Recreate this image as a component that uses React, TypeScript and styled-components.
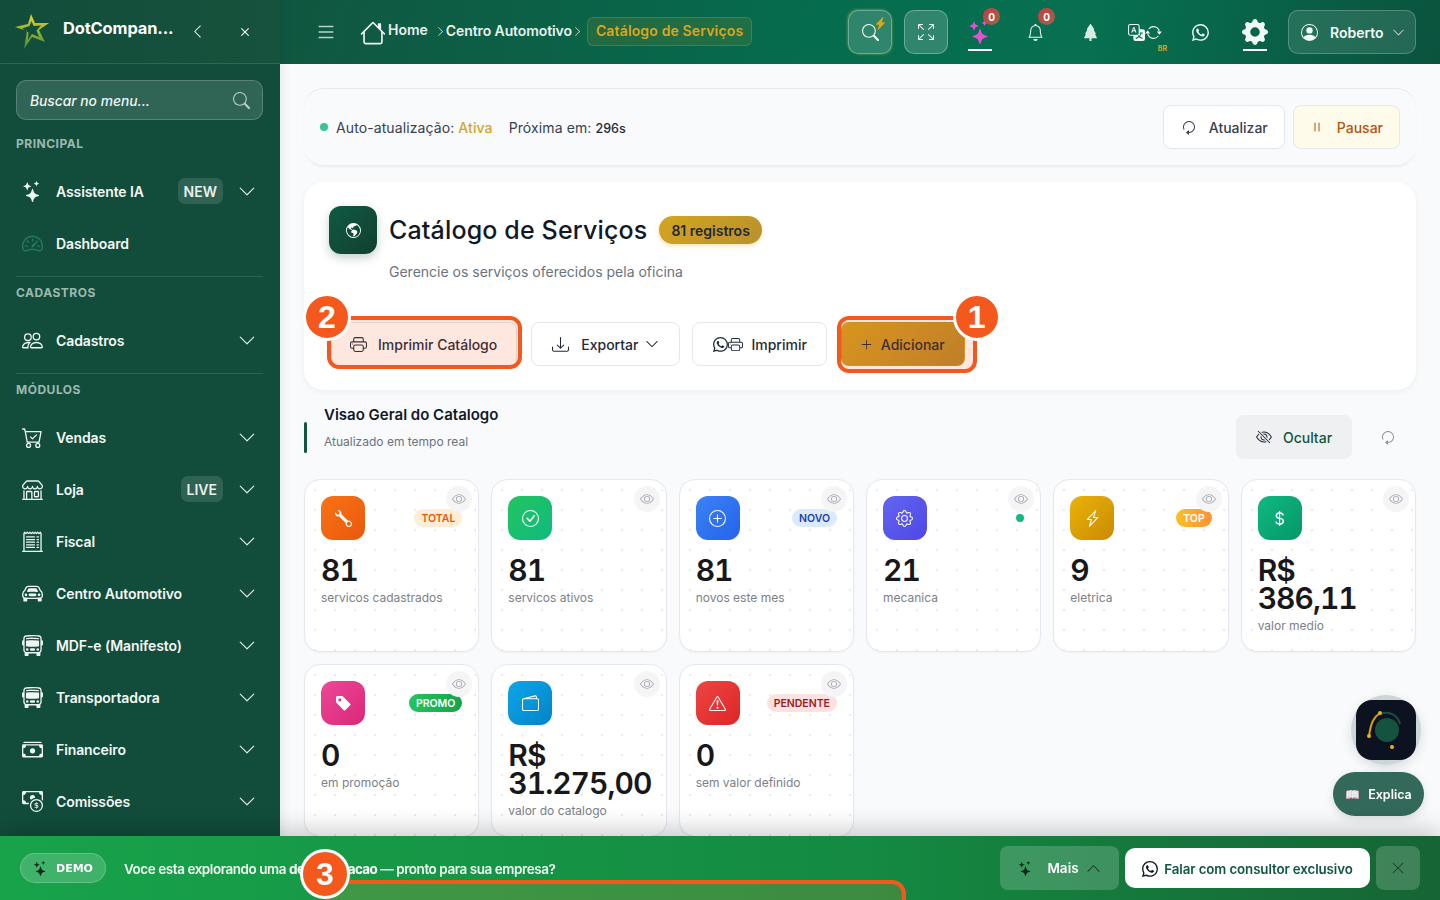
import React from 'react';
import styled, { createGlobalStyle } from 'styled-components';
import {
  BsArrowClockwise, BsArrowRepeat, BsArrowsFullscreen, BsBell, BsBusFront, BsCarFront, BsCartCheck,
  BsCashCoin, BsCashStack, BsCheckCircle, BsChevronDown, BsChevronLeft, BsChevronRight, BsChevronUp,
  BsCurrencyDollar, BsDownload, BsExclamationTriangle, BsEye, BsEyeSlash, BsGear, BsGearFill,
  BsGlobeAmericas, BsHouse, BsLightningCharge, BsLightningChargeFill, BsList, BsPause, BsPeople,
  BsPersonCircle, BsPlusCircle, BsPlusLg, BsPrinter, BsReceiptCutoff, BsSearch, BsShop,
  BsSpeedometer2, BsStars, BsTagFill, BsTranslate, BsTreeFill, BsWallet2, BsWhatsapp, BsWrench, BsX, BsXLg,
} from 'react-icons/bs';

const GlobalStyle = createGlobalStyle`
  html, body {
    margin: 0;
    height: 100%;
    overflow: hidden;
    background: #f9fafb;
    font-family: 'Inter', 'Liberation Sans', sans-serif;
  }
  * { box-sizing: border-box; }
`;

type NavEntry = { label: string; icon: React.ReactNode; tag?: string; dim?: boolean; noArrow?: boolean };

const principal: NavEntry[] = [
  { label: 'Assistente IA', icon: <BsStars />, tag: 'NEW' },
  { label: 'Dashboard', icon: <BsSpeedometer2 />, dim: true, noArrow: true },
];
const cadastros: NavEntry[] = [{ label: 'Cadastros', icon: <BsPeople /> }];
const modulos: NavEntry[] = [
  { label: 'Vendas', icon: <BsCartCheck /> },
  { label: 'Loja', icon: <BsShop />, tag: 'LIVE' },
  { label: 'Fiscal', icon: <BsReceiptCutoff /> },
  { label: 'Centro Automotivo', icon: <BsCarFront /> },
  { label: 'MDF-e (Manifesto)', icon: <BsBusFront /> },
  { label: 'Transportadora', icon: <BsBusFront /> },
  { label: 'Financeiro', icon: <BsCashStack /> },
  { label: 'Comissões', icon: <BsCashCoin /> },
];

type Stat = { value: string; label: string; icon: React.ReactNode; from: string; to: string; badge?: string; tone?: string };

const stats: Stat[] = [
  { value: '81', label: 'servicos cadastrados', icon: <BsWrench />, from: '#f97316', to: '#ea580c', badge: 'TOTAL', tone: 'orange' },
  { value: '81', label: 'servicos ativos', icon: <BsCheckCircle />, from: '#22c55e', to: '#10b981' },
  { value: '81', label: 'novos este mes', icon: <BsPlusCircle />, from: '#3b82f6', to: '#2563eb', badge: 'NOVO', tone: 'blue' },
  { value: '21', label: 'mecanica', icon: <BsGear />, from: '#6366f1', to: '#4f46e5', tone: 'dot' },
  { value: '9', label: 'eletrica', icon: <BsLightningCharge />, from: '#eab308', to: '#ca8a04', badge: 'TOP', tone: 'top' },
  { value: 'R$ 386,11', label: 'valor medio', icon: <BsCurrencyDollar />, from: '#10b981', to: '#059669' },
  { value: '0', label: 'em promoção', icon: <BsTagFill />, from: '#ec4899', to: '#db2777', badge: 'PROMO', tone: 'green' },
  { value: 'R$ 31.275,00', label: 'valor do catalogo', icon: <BsWallet2 />, from: '#0ea5e9', to: '#0284c7' },
  { value: '0', label: 'sem valor definido', icon: <BsExclamationTriangle />, from: '#ef4444', to: '#dc2626', badge: 'PENDENTE', tone: 'red' },
];

function NavGroup({ items }: { items: NavEntry[] }) {
  return (
    <>
      {items.map((item) => (
        <NavRow key={item.label}>
          <NavIcon $dim={item.dim}>{item.icon}</NavIcon>
          <NavLabel>{item.label}</NavLabel>
          {item.tag && <NavTag>{item.tag}</NavTag>}
          {!item.noArrow && <NavArrow><BsChevronDown /></NavArrow>}
        </NavRow>
      ))}
    </>
  );
}

function StarLogo() {
  return (
    <svg width="38" height="38" viewBox="0 0 38 38" fill="none">
      <defs>
        <linearGradient id="star" x1="0" y1="0" x2="0" y2="1">
          <stop offset="0" stopColor="#e8d52a" />
          <stop offset="1" stopColor="#3f8f3a" />
        </linearGradient>
      </defs>
      <path
        d="M17 1 L21 10 L35 10 L25 17 L31 29 L18 24 L10 36 L13 18 L1 14 L14 11 Z M17.5 8 L15.5 13 L8 15.5 L14.5 19.5 L14 27 L18 21 L25 24 L22.5 17.5 L27 12.5 L19.5 13 Z"
        fill="url(#star)"
        fillRule="evenodd"
      />
    </svg>
  );
}

function AiMark() {
  return (
    <svg width="60" height="60" viewBox="0 0 60 60" fill="none">
      <circle cx="31" cy="30" r="12" fill="#14533f" />
      <path d="M24 14 C34 10 42 16 44 24" stroke="#14533f" strokeWidth="2" />
      <path d="M24 13 C18 17 15 22 13 36" stroke="#d4a017" strokeWidth="2" />
      <circle cx="24" cy="13" r="2" fill="#eab308" />
      <circle cx="13" cy="36" r="2" fill="#eab308" />
      <circle cx="36" cy="47" r="2" fill="#eab308" />
    </svg>
  );
}

export default function App() {
  return (
    <>
      <GlobalStyle />
      <Shell>
        <Sidebar>
          <Brand>
            <StarLogo />
            <BrandName>DotCompan...</BrandName>
            <BrandAction><BsChevronLeft /></BrandAction>
            <BrandClose><BsX /></BrandClose>
          </Brand>
          <SideBody>
            <MenuSearch>
              <span>Buscar no menu...</span>
              <BsSearch />
            </MenuSearch>
            <SectionLabel>PRINCIPAL</SectionLabel>
            <NavGroup items={principal} />
            <SideDivider />
            <SectionLabel>CADASTROS</SectionLabel>
            <NavGroup items={cadastros} />
            <SideDivider />
            <SectionLabel>MÓDULOS</SectionLabel>
            <NavGroup items={modulos} />
          </SideBody>
        </Sidebar>

        <Column>
          <Header>
            <Crumbs>
              <Burger><BsList /></Burger>
              <HomeIcon><BsHouse /></HomeIcon>
              <HomeLabel>Home</HomeLabel>
              <CrumbSep $gap={7}><BsChevronRight /></CrumbSep>
              <CrumbText>Centro Automotivo</CrumbText>
              <CrumbSep $gap={0}><BsChevronRight /></CrumbSep>
              <CrumbChip>Catálogo de Serviços</CrumbChip>
            </Crumbs>
            <HeaderTools>
              <GlassButton $glow>
                <BsSearch />
                <Bolt><BsLightningChargeFill /></Bolt>
              </GlassButton>
              <GlassButton><BsArrowsFullscreen /></GlassButton>
              <ToolGroup>
                <ToolSlot $active $color="#e64fd0" $size={24}>
                  <BsStars />
                  <CountBadge>0</CountBadge>
                </ToolSlot>
                <ToolSlot>
                  <BsBell />
                  <CountBadge>0</CountBadge>
                </ToolSlot>
                <ToolSlot $color="#d8ece4"><BsTreeFill /></ToolSlot>
                <ToolSlot>
                  <TranslatePair>
                    <BsTranslate />
                    <BsArrowRepeat />
                  </TranslatePair>
                  <LangTag>BR</LangTag>
                </ToolSlot>
                <ToolSlot><BsWhatsapp /></ToolSlot>
                <ToolSlot $active $size={26}><BsGearFill /></ToolSlot>
              </ToolGroup>
              <ProfileButton>
                <BsPersonCircle />
                <span>Roberto</span>
                <ProfileArrow><BsChevronDown /></ProfileArrow>
              </ProfileButton>
            </HeaderTools>
          </Header>

          <Main>
            <AutoCard>
              <AutoStatus>
                <StatusDot />
                <span>Auto-atualização: <ActiveWord>Ativa</ActiveWord></span>
                <NextRun>Próxima em: <strong>296s</strong></NextRun>
              </AutoStatus>
              <AutoActions>
                <AutoButton><ReloadGlyph><BsArrowClockwise /></ReloadGlyph>Atualizar</AutoButton>
                <AutoButton $warn><BsPause />Pausar</AutoButton>
              </AutoActions>
            </AutoCard>

            <CatalogCard>
              <TitleRow>
                <TitleIcon><BsGlobeAmericas /></TitleIcon>
                <PageTitle>Catálogo de Serviços</PageTitle>
                <CountPill>81 registros</CountPill>
              </TitleRow>
              <PageHint>Gerencie os serviços oferecidos pela oficina</PageHint>
              <ActionRow>
                <Marked $mr={2}>
                  <ActionButton $pad={18} $padRight={19}><BsPrinter />Imprimir Catálogo</ActionButton>
                  <Outline $top={-6} $left={-4} $right={-5} $bottom={-3} />
                  <StepBadge $x="left">2</StepBadge>
                </Marked>
                <ActionButton $gap={12}>
                  <BsDownload />Exportar
                  <SmallArrow><BsChevronDown /></SmallArrow>
                </ActionButton>
                <ActionButton $gap={8} $padRight={19}>
                  <IconPair><BsWhatsapp /><BsPrinter /></IconPair>Imprimir
                </ActionButton>
                <Marked $ml={2}>
                  <ActionButton $gold $pad={18} $padRight={19} $gap={8}><BsPlusLg />Adicionar</ActionButton>
                  <Outline $top={-6} $left={-4} $right={-12} $bottom={-7} />
                  <StepBadge $x="right">1</StepBadge>
                </Marked>
              </ActionRow>
            </CatalogCard>

            <OverviewHead>
              <AccentBar />
              <OverviewText>
                <OverviewTitle>Visao Geral do Catalogo</OverviewTitle>
                <OverviewSub>Atualizado em tempo real</OverviewSub>
              </OverviewText>
              <OverviewTools>
                <HideButton><BsEyeSlash />Ocultar</HideButton>
                <ReloadIcon><ReloadGlyph><BsArrowClockwise /></ReloadGlyph></ReloadIcon>
              </OverviewTools>
            </OverviewHead>

            <StatGrid>
              {stats.map((stat) => (
                <StatCard key={stat.label}>
                  <EyeToggle><BsEye /></EyeToggle>
                  <StatTop>
                    <StatIcon $from={stat.from} $to={stat.to}>{stat.icon}</StatIcon>
                    {stat.badge && <StatBadge $tone={stat.tone}>{stat.badge}</StatBadge>}
                    {stat.tone === 'dot' && <LiveDot />}
                  </StatTop>
                  <StatValue>{stat.value}</StatValue>
                  <StatLabel>{stat.label}</StatLabel>
                </StatCard>
              ))}
            </StatGrid>
          </Main>
        </Column>
      </Shell>

      <FloatStack>
        <AiHalo>
          <AiButton><AiMark /></AiButton>
        </AiHalo>
        <ExplainButton><span>📖</span>Explica</ExplainButton>
      </FloatStack>

      <DemoBar>
        <DemoPill><BsStars />DEMO</DemoPill>
        <DemoText>Voce esta explorando uma <strong>demonstracao</strong> — pronto para sua empresa?</DemoText>
        <DemoActions>
          <MoreButton>
            <DarkStars><BsStars /></DarkStars>
            Mais
            <DarkArrow><BsChevronUp /></DarkArrow>
          </MoreButton>
          <ConsultButton><BsWhatsapp />Falar com consultor exclusivo</ConsultButton>
          <CloseButton><BsXLg /></CloseButton>
        </DemoActions>
        <BarOutline />
        <BarStep>3</BarStep>
      </DemoBar>
    </>
  );
}

const Shell = styled.div`
  display: flex;
  height: 100vh;
  overflow: hidden;
`;

const Sidebar = styled.aside`
  width: 280px;
  flex-shrink: 0;
  height: 100%;
  background: #124d3b;
  color: #f4f8f6;
  box-shadow: 2px 0 10px rgba(0, 0, 0, 0.08);
  z-index: 2;
`;

const Brand = styled.div`
  height: 64px;
  display: flex;
  align-items: center;
  padding-left: 14px;
  border-bottom: 1px solid rgba(255, 255, 255, 0.12);
  background: linear-gradient(90deg, #124d3b, #16523c);
`;

const BrandName = styled.div`
  width: 112px;
  margin-left: 11px;
  margin-top: -8px;
  font-size: 16.4px;
  font-weight: 700;
  letter-spacing: -0.1px;
  white-space: nowrap;
  color: #fff;
`;

const BrandAction = styled.div`
  display: flex;
  margin-left: 15px;
  font-size: 15px;
`;

const BrandClose = styled.div`
  display: flex;
  margin-left: 31px;
  font-size: 18px;
`;

const SideBody = styled.div`
  padding: 16px 17px 0 16px;
`;

const MenuSearch = styled.div`
  height: 40px;
  display: flex;
  align-items: center;
  justify-content: space-between;
  padding: 1px 12px 0 13px;
  border: 1px solid rgba(255, 255, 255, 0.2);
  border-radius: 10px;
  background: rgba(255, 255, 255, 0.13);
  font-size: 13.8px;
  font-style: italic;
  font-weight: 500;
  color: #f0f5f3;
  margin-bottom: 16px;

  svg {
    font-size: 17px;
    color: #b9cfc8;
  }
`;

const SectionLabel = styled.div`
  height: 16px;
  line-height: 16px;
  font-size: 12px;
  font-weight: 700;
  letter-spacing: 0.5px;
  color: #9db9af;
  margin-bottom: 13px;
`;

const SideDivider = styled.div`
  height: 1px;
  margin: 7px 0 8px;
  background: rgba(255, 255, 255, 0.12);
`;

const NavRow = styled.div`
  height: 52px;
  display: flex;
  align-items: center;
  padding: 0 7px 0 5px;
`;

const NavIcon = styled.div<{ $dim?: boolean }>`
  width: 22px;
  display: flex;
  justify-content: center;
  font-size: 21px;
  color: ${(p) => (p.$dim ? '#2a7a60' : '#eef5f2')};
  margin-right: 13px;
`;

const NavLabel = styled.div`
  flex: 1;
  font-size: 14px;
  font-weight: 600;
  color: #f2f7f5;
  letter-spacing: -0.1px;
`;

const NavTag = styled.div`
  height: 26px;
  padding: 0 6px;
  display: flex;
  align-items: center;
  border-radius: 7px;
  background: rgba(255, 255, 255, 0.12);
  font-size: 14px;
  font-weight: 600;
  color: #e8f0ed;
`;

const NavArrow = styled.div`
  width: 18px;
  display: flex;
  justify-content: center;
  margin-left: 15px;
  font-size: 19px;
  color: #e4eeea;
`;

const Column = styled.div`
  flex: 1;
  min-width: 0;
  display: flex;
  flex-direction: column;
`;

const Header = styled.header`
  height: 64px;
  flex-shrink: 0;
  display: flex;
  align-items: center;
  justify-content: space-between;
  padding: 0 24px 0 37px;
  background: linear-gradient(100deg, #115640 0%, #056d4e 48%, #067051 70%, #0b533e 100%);
  color: #eef6f3;
`;

const Crumbs = styled.nav`
  display: flex;
  align-items: center;
`;

const Burger = styled.div`
  display: flex;
  font-size: 22px;
  color: #b9d2c9;
  margin: 0 23px 0 -2px;
`;

const HomeIcon = styled.div`
  display: flex;
  font-size: 26px;
  color: #f0f6f3;
  margin-top: 2px;
`;

const HomeLabel = styled.div`
  font-size: 14px;
  font-weight: 600;
  color: #e6f1ed;
  margin: -6px 0 0 2px;
`;

const CrumbSep = styled.div<{ $gap: number }>`
  display: flex;
  font-size: 11px;
  color: #dceae5;
  margin: -2px 0 0 ${(p) => p.$gap}px;
`;

const CrumbText = styled.div`
  font-size: 14px;
  font-weight: 600;
  letter-spacing: -0.1px;
  color: #e6f1ed;
  margin-top: -3px;
`;

const CrumbChip = styled.div`
  height: 29px;
  display: flex;
  align-items: center;
  margin: -1px 0 0 4px;
  padding: 0 8px 2px;
  border: 1px solid rgba(255, 255, 255, 0.13);
  border-radius: 6px;
  background: rgba(212, 160, 23, 0.12);
  font-size: 14px;
  font-weight: 600;
  letter-spacing: 0.15px;
  color: #d9a61e;
`;

const HeaderTools = styled.div`
  display: flex;
  align-items: center;
  gap: 12px;
`;

const GlassButton = styled.div<{ $glow?: boolean }>`
  position: relative;
  width: 44px;
  height: 44px;
  display: flex;
  align-items: center;
  justify-content: center;
  border: 1px solid rgba(255, 255, 255, 0.3);
  border-radius: 10px;
  background: rgba(255, 255, 255, 0.17);
  font-size: ${(p) => (p.$glow ? 17 : 16)}px;
  color: #f2f8f5;
  box-shadow: ${(p) => (p.$glow ? '-1px -1px 2px rgba(220, 190, 40, 0.35), 1px 1px 2px rgba(220, 190, 40, 0.25)' : 'none')};
`;

const Bolt = styled.span`
  position: absolute;
  top: 6px;
  right: 4px;
  display: flex;
  font-size: 13px;
  color: #d9a61e;
`;

const ToolGroup = styled.div`
  display: flex;
  gap: 11px;
  margin-left: -2px;
  margin-right: -1px;
`;

const ToolSlot = styled.div<{ $active?: boolean; $color?: string; $size?: number }>`
  position: relative;
  width: 44px;
  height: 44px;
  display: flex;
  align-items: center;
  justify-content: center;
  font-size: ${(p) => p.$size ?? 17}px;
  color: ${(p) => p.$color ?? '#f2f8f5'};

  &::after {
    content: '';
    display: ${(p) => (p.$active ? 'block' : 'none')};
    position: absolute;
    left: 10px;
    right: 10px;
    bottom: 3px;
    height: 2px;
    background: #fff;
  }
`;

const CountBadge = styled.span`
  position: absolute;
  top: -2px;
  right: 2px;
  width: 17px;
  height: 17px;
  border-radius: 50%;
  display: flex;
  align-items: center;
  justify-content: center;
  background: linear-gradient(135deg, #d6393e, #8c6a4f);
  font-size: 10px;
  font-weight: 700;
  color: #fff;
`;

const TranslatePair = styled.div`
  display: flex;
  align-items: center;
  font-size: 17px;
`;

const LangTag = styled.span`
  position: absolute;
  right: 0;
  bottom: 1px;
  font-size: 7px;
  font-weight: 700;
  color: #d9a61e;
`;

const ProfileButton = styled.div`
  width: 128px;
  height: 44px;
  display: flex;
  align-items: center;
  padding-left: 12px;
  border: 1px solid rgba(255, 255, 255, 0.22);
  border-radius: 10px;
  background: rgba(255, 255, 255, 0.11);
  font-size: 14px;
  font-weight: 600;
  color: #f2f8f5;

  svg {
    font-size: 17px;
  }

  span {
    margin-left: 12px;
  }
`;

const ProfileArrow = styled.div`
  display: flex;
  margin-left: 8px;

  svg {
    font-size: 13px;
    color: #c9ddd6;
  }
`;

const Main = styled.main`
  flex: 1;
  min-height: 0;
  overflow: hidden;
  padding: 24px 24px 0;
  background: #f9fafb;
`;

const AutoCard = styled.section`
  height: 77px;
  display: flex;
  align-items: center;
  justify-content: space-between;
  padding: 0 16px;
  margin-bottom: 17px;
  border-radius: 20px;
  border-top: 1px solid #e5e7eb;
  background: #f9fafb;
  box-shadow: 0 3px 3px -1px rgba(0, 0, 0, 0.06);
`;

const AutoStatus = styled.div`
  display: flex;
  align-items: center;
  font-size: 14px;
  letter-spacing: 0.1px;
  color: #374151;
`;

const StatusDot = styled.span`
  width: 8px;
  height: 8px;
  margin-right: 8px;
  border-radius: 50%;
  background: #34c796;
`;

const ActiveWord = styled.span`
  font-weight: 500;
  color: #d4a52a;
`;

const NextRun = styled.span`
  margin-left: 16px;
  color: #374151;

  strong {
    font-size: 12.5px;
    font-weight: 500;
    letter-spacing: 0;
    color: #1f2937;
  }
`;

const AutoActions = styled.div`
  display: flex;
  gap: 8px;
`;

const AutoButton = styled.div<{ $warn?: boolean }>`
  height: 44px;
  display: flex;
  align-items: center;
  gap: 12px;
  padding: 0 16px;
  padding-left: ${(p) => (p.$warn ? 15 : 17)}px;
  border: 1px solid #e5e7eb;
  border-radius: 8px;
  background: ${(p) => (p.$warn ? '#fffbeb' : '#fff')};
  font-size: 14px;
  font-weight: 500;
  color: ${(p) => (p.$warn ? '#b45309' : '#374151')};

  svg {
    font-size: 16px;
  }
`;

const ReloadGlyph = styled.span`
  display: flex;
  transform: rotate(180deg);
`;

const CatalogCard = styled.section`
  height: 208px;
  padding: 24px 25px;
  margin-bottom: 15px;
  border-radius: 20px;
  background: #fff;
  box-shadow: 0 2px 6px rgba(0, 0, 0, 0.05);
`;

const TitleRow = styled.div`
  display: flex;
  align-items: center;
`;

const TitleIcon = styled.div`
  width: 48px;
  height: 48px;
  display: flex;
  align-items: center;
  justify-content: center;
  margin-right: 12px;
  border-radius: 12px;
  background: linear-gradient(135deg, #0f5a43, #123f30);
  box-shadow: 0 4px 10px rgba(18, 77, 59, 0.25);
  font-size: 15px;
  color: #fff;
`;

const PageTitle = styled.h1`
  margin: 0 12px 0 0;
  font-size: 25px;
  font-weight: 500;
  letter-spacing: 0.15px;
  color: #111827;
`;

const CountPill = styled.div`
  height: 28px;
  display: flex;
  align-items: center;
  padding: 0 12px;
  border-radius: 14px;
  background: linear-gradient(135deg, #d4a520, #b8912e);
  box-shadow: 0 2px 5px rgba(212, 165, 32, 0.3);
  font-size: 14px;
  font-weight: 600;
  color: #1f2937;
`;

const PageHint = styled.p`
  margin: 10px 0 0 60px;
  font-size: 14px;
  line-height: 16px;
  color: #6b7280;
`;

const ActionRow = styled.div`
  display: flex;
  gap: 12px;
  margin-top: 42px;
  padding-left: 2px;
`;

const Marked = styled.div<{ $ml?: number; $mr?: number }>`
  position: relative;
  margin-left: ${(p) => p.$ml ?? 0}px;
  margin-right: ${(p) => p.$mr ?? 0}px;
`;

const ActionButton = styled.div<{ $gold?: boolean; $pad?: number; $padRight?: number; $gap?: number }>`
  height: 44px;
  display: flex;
  align-items: center;
  gap: ${(p) => p.$gap ?? 11}px;
  padding: 0 ${(p) => p.$padRight ?? p.$pad ?? 20}px 0 ${(p) => p.$pad ?? 20}px;
  border: 1px solid ${(p) => (p.$gold ? 'transparent' : '#e5e7eb')};
  border-radius: 8px;
  background: ${(p) => (p.$gold ? 'linear-gradient(135deg, #d4a020, #b8862b)' : '#fff')};
  font-size: 14px;
  font-weight: 500;
  white-space: nowrap;
  color: #1f2937;

  svg {
    font-size: ${(p) => (p.$gold ? 13 : 17)}px;
  }
`;

const SmallArrow = styled.span`
  display: flex;
  margin-left: -5px;

  svg {
    font-size: 14px;
  }
`;

const IconPair = styled.span`
  display: flex;
  align-items: center;

  svg {
    font-size: 15px;
  }
`;

const Outline = styled.div<{ $top: number; $left: number; $right: number; $bottom: number }>`
  position: absolute;
  top: ${(p) => p.$top}px;
  left: ${(p) => p.$left}px;
  right: ${(p) => p.$right}px;
  bottom: ${(p) => p.$bottom}px;
  border: 4px solid #f4581c;
  border-radius: 12px;
  background: rgba(244, 88, 28, 0.14);
`;

const StepBadge = styled.div<{ $x: 'left' | 'right' }>`
  position: absolute;
  top: -29px;
  ${(p) => (p.$x === 'left' ? 'left: -28px;' : 'right: -36px;')}
  width: 48px;
  height: 48px;
  display: flex;
  align-items: center;
  justify-content: center;
  border: 3px solid #fff;
  border-radius: 50%;
  background: #f4581c;
  font-family: 'Liberation Sans', sans-serif;
  font-size: 32px;
  font-weight: 700;
  color: #fff;
`;

const OverviewHead = styled.div`
  height: 54px;
  display: flex;
  align-items: flex-start;
  margin-bottom: 20px;
`;

const AccentBar = styled.div`
  width: 3px;
  height: 31px;
  margin: 17px 17px 0 0;
  border-radius: 2px;
  background: #115640;
`;

const OverviewText = styled.div`
  flex: 1;
`;

const OverviewTitle = styled.div`
  font-size: 15px;
  line-height: 20px;
  font-weight: 600;
  color: #111827;
`;

const OverviewSub = styled.div`
  margin-top: 8px;
  font-size: 12px;
  line-height: 18px;
  color: #6b7280;
`;

const OverviewTools = styled.div`
  display: flex;
  align-items: center;
  gap: 28px;
  margin-top: 10px;
  padding-right: 20px;
`;

const HideButton = styled.div`
  width: 116px;
  height: 44px;
  display: flex;
  align-items: center;
  justify-content: center;
  gap: 11px;
  border-radius: 8px;
  background: #eef0f1;
  font-size: 14px;
  font-weight: 500;
  color: #115640;

  svg {
    font-size: 16px;
    color: #1f2937;
  }
`;

const ReloadIcon = styled.div`
  display: flex;
  font-size: 16px;
  color: #8f96a3;
`;

const StatGrid = styled.div`
  display: grid;
  grid-template-columns: repeat(6, minmax(0, 1fr));
  grid-auto-rows: 173px;
  gap: 12px;
`;

const StatCard = styled.article`
  position: relative;
  padding: 16px;
  border: 1px solid #e5e9ef;
  border-radius: 16px;
  background-color: #fff;
  background-image: radial-gradient(circle, #e9ebef 1px, transparent 1.2px);
  background-size: 20px 20px;
  box-shadow: 0 1px 2px rgba(0, 0, 0, 0.04);
`;

const EyeToggle = styled.div`
  position: absolute;
  top: 6px;
  right: 6px;
  width: 26px;
  height: 26px;
  display: flex;
  align-items: center;
  justify-content: center;
  border-radius: 50%;
  background: #f5f5f6;
  font-size: 14px;
  color: #a6abb4;
`;

const StatTop = styled.div`
  height: 44px;
  display: flex;
  align-items: center;
  justify-content: space-between;
`;

const StatIcon = styled.div<{ $from: string; $to: string }>`
  width: 44px;
  height: 44px;
  display: flex;
  align-items: center;
  justify-content: center;
  border-radius: 12px;
  background: linear-gradient(135deg, ${(p) => p.$from}, ${(p) => p.$to});
  font-size: 17px;
  color: #fff;
`;

const badgeTones: Record<string, string> = {
  orange: 'background: #ffedd5; color: #ea580c;',
  blue: 'background: #dbeafe; color: #1e40af;',
  top: 'background: linear-gradient(90deg, #fbbf24, #fb923c); color: #fff;',
  green: 'background: linear-gradient(90deg, #22c55e, #16a34a); color: #fff;',
  red: 'background: #fee2e2; color: #991b1b;',
};

const StatBadge = styled.span<{ $tone?: string }>`
  height: 18px;
  display: flex;
  align-items: center;
  padding: 0 7px;
  border-radius: 9px;
  font-size: 10.5px;
  font-weight: 600;
  ${(p) => badgeTones[p.$tone ?? 'orange']}
`;

const LiveDot = styled.span`
  width: 8px;
  height: 8px;
  border-radius: 50%;
  background: #10b981;
`;

const StatValue = styled.div`
  margin-top: 16px;
  font-size: 30px;
  line-height: 28px;
  font-weight: 600;
  font-variant-numeric: tabular-nums;
  letter-spacing: -1px;
  color: #18181b;
`;

const StatLabel = styled.div`
  margin-top: 6px;
  font-size: 12px;
  line-height: 16px;
  color: #7c7f88;
`;

const FloatStack = styled.div`
  position: fixed;
  right: 16px;
  top: 695px;
  display: flex;
  flex-direction: column;
  align-items: flex-end;
  z-index: 5;
`;

const AiHalo = styled.div`
  width: 70px;
  height: 70px;
  margin-right: 3px;
  display: flex;
  align-items: center;
  justify-content: center;
  border-radius: 50%;
  background: rgba(18, 77, 59, 0.2);
  box-shadow: 0 4px 12px rgba(0, 0, 0, 0.12);
`;

const AiButton = styled.div`
  width: 60px;
  height: 60px;
  border-radius: 16px;
  background: #0d1220;
`;

const ExplainButton = styled.div`
  width: 91px;
  height: 44px;
  margin-top: 7px;
  display: flex;
  align-items: center;
  justify-content: center;
  gap: 8px;
  border-radius: 22px;
  background: #33695a;
  box-shadow: 0 3px 10px rgba(0, 0, 0, 0.12);
  font-size: 12.5px;
  font-weight: 600;
  color: #fff;

  span {
    font-size: 12px;
  }
`;

const DemoBar = styled.div`
  position: fixed;
  left: 0;
  right: 0;
  bottom: 0;
  height: 64px;
  display: flex;
  align-items: center;
  padding: 0 20px;
  overflow: hidden;
  background: linear-gradient(90deg, #18a34a 0%, #148a42 60%, #166534 100%);
  box-shadow: 0 -6px 24px rgba(0, 0, 0, 0.2);
  z-index: 6;
`;

const DemoPill = styled.div`
  width: 86px;
  height: 30px;
  display: flex;
  align-items: center;
  justify-content: center;
  gap: 8px;
  border: 1px solid rgba(255, 255, 255, 0.2);
  border-radius: 15px;
  background: rgba(255, 255, 255, 0.18);
  font-family: 'DejaVu Sans', sans-serif;
  font-size: 11px;
  font-weight: 700;
  color: #fff;

  svg {
    font-size: 15px;
    color: #0d2b1c;
  }
`;

const DemoText = styled.div`
  margin: 2px 0 0 18px;
  font-size: 13.5px;
  font-weight: 600;
  letter-spacing: -0.45px;
  color: #eef8f1;

  strong {
    font-weight: 700;
    letter-spacing: -0.6px;
    color: #fff;
  }
`;

const DemoActions = styled.div`
  display: flex;
  align-items: center;
  gap: 6px;
  margin-left: auto;
`;

const MoreButton = styled.div`
  width: 119px;
  height: 44px;
  display: flex;
  align-items: center;
  justify-content: center;
  gap: 14px;
  border-radius: 8px;
  background: rgba(255, 255, 255, 0.18);
  font-size: 13.5px;
  font-weight: 600;
  color: #fff;
`;

const DarkStars = styled.span`
  display: flex;
  font-size: 15px;
  color: #0d2b1c;
`;

const DarkArrow = styled.span`
  display: flex;
  margin-left: -7px;
  font-size: 15px;
  color: #1b3a2a;
`;

const ConsultButton = styled.div`
  width: 245px;
  height: 40px;
  display: flex;
  align-items: center;
  justify-content: center;
  gap: 6px;
  padding-top: 1px;
  border-radius: 10px;
  background: #fff;
  font-size: 13.3px;
  font-weight: 600;
  letter-spacing: -0.1px;
  color: #115640;

  svg {
    font-size: 16px;
    color: #111827;
  }
`;

const CloseButton = styled.div`
  width: 44px;
  height: 44px;
  display: flex;
  align-items: center;
  justify-content: center;
  border-radius: 8px;
  background: rgba(255, 255, 255, 0.18);
  font-size: 14px;
  color: #1b3a2a;
`;

const BarOutline = styled.div`
  position: absolute;
  left: 325px;
  top: 44px;
  width: 581px;
  height: 60px;
  border: 4px solid #f4581c;
  border-radius: 14px;
  background: rgba(244, 150, 60, 0.18);
`;

const BarStep = styled.div`
  position: absolute;
  left: 300px;
  top: 13px;
  width: 50px;
  height: 50px;
  display: flex;
  align-items: center;
  justify-content: center;
  border: 3px solid #fff;
  border-radius: 50%;
  background: #f4581c;
  font-family: 'Liberation Sans', sans-serif;
  font-size: 32px;
  font-weight: 700;
  color: #fff;
`;
